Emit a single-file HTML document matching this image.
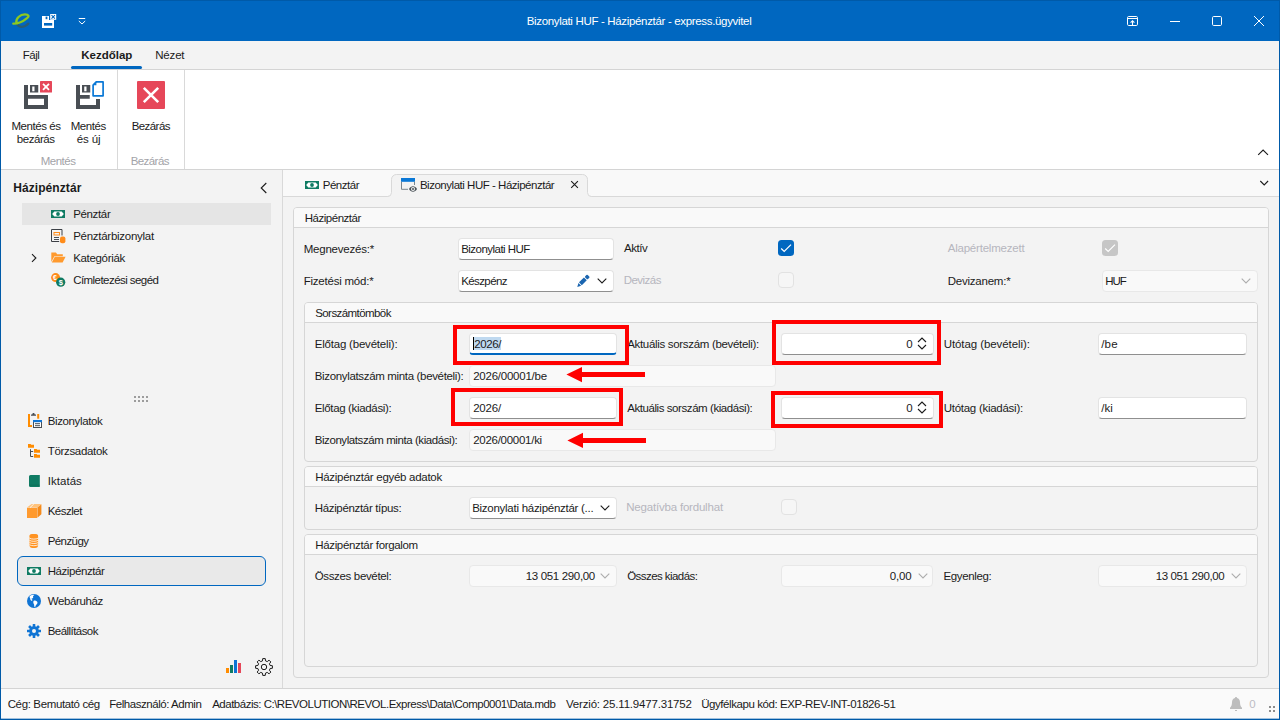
<!DOCTYPE html>
<html lang="hu">
<head>
<meta charset="utf-8">
<title>Bizonylati HUF - Házipénztár - express.ügyvitel</title>
<style>
*{box-sizing:border-box;margin:0;padding:0}
html,body{width:1280px;height:720px;overflow:hidden;background:#f3f3f3}
body{font-family:"Liberation Sans",sans-serif;font-size:11.5px;color:#1b1b1b;position:relative;line-height:14px}
.a{position:absolute}
.t{position:absolute;white-space:nowrap;line-height:14px;height:14px}
.c{text-align:center}
.r{text-align:right}
.g{color:#a3a3a8}
.d{color:#b6b6be}
.b{font-weight:bold}
svg{position:absolute;overflow:visible}
/* frame */
#titlebar{left:0;top:0;width:1280px;height:41px;background:#0067c0}
#tabrow{left:1px;top:41px;width:1278px;height:29px;background:#f3f3f3;border-bottom:1px solid #d4d4d4}
#ribbon{left:1px;top:70px;width:1278px;height:100px;background:#fff;border-bottom:1px solid #d4d4d4}
#bl{left:0;top:0;width:1px;height:720px;background:#005aa8}
#br{left:1279px;top:0;width:1px;height:720px;background:#005aa8}
#bb{left:0;top:719px;width:1280px;height:1px;background:#005aa8;box-shadow:0 -1px 0 rgba(0,90,168,.35)}
#bt{left:0;top:0;width:1280px;height:1px;background:#005aa8}
#side{left:1px;top:170px;width:282px;height:518px;background:#f3f3f3;border-right:1px solid #d9d9d9}
#status{left:1px;top:688px;width:1278px;height:31px;background:#fafafa;border-top:1px solid #d4d4d4}
#tabstrip{left:283px;top:170px;width:996px;height:27px;background:#f9f9f9;border-bottom:1px solid #d9d9d9}
#content{left:283px;top:197px;width:996px;height:491px;background:#f3f3f3}
.grp{position:absolute;border:1px solid #d6d6d6;border-radius:4px;background:#f3f3f3}
.gh{position:absolute;left:0;top:0;right:0;height:20px;background:#f9f9f9;border-bottom:1px solid #d6d6d6;border-radius:3px 3px 0 0}
.in{position:absolute;background:#fff;border:1px solid #e3e3e3;border-bottom-color:#8f8f8f;border-radius:4px}
.ro{position:absolute;background:#f9f9f9;border:1px solid #e8e8e8;border-radius:4px}
.red{position:absolute;border:4px solid #ff0000}
</style>
</head>
<body>
<div class="a" id="titlebar"></div>
<div class="a" id="tabrow"></div>
<div class="a" id="ribbon"></div>
<div class="a" id="side"></div>
<div class="a" id="tabstrip"></div>
<div class="a" id="content"></div>
<div class="a" id="status"></div>

<!--TITLE-->
<!-- app logo -->
<svg style="left:12px;top:13px" width="18" height="16" viewBox="0 0 18 16">
 <path d="M5 11 C7 15, 13 14.600, 16.400 10.600" fill="none" stroke="#2a5d73" stroke-width="2.300" stroke-linecap="round"/>
 <path d="M1.300 10.700 C5.500 10.800, 11 8.600, 15 5.200 C17.600 3, 16.600 1.300, 13 1.300 C8 1.300, 3.600 5.600, 4.400 10" fill="none" stroke="#8cc820" stroke-width="2.300" stroke-linecap="round"/>
</svg>
<!-- QAT save&close (white) -->
<svg style="left:42px;top:14px" width="15" height="14" viewBox="0 0 15 14">
 <path d="M0 2h7v4h5v8H0z" fill="#fff"/>
 <rect x="2" y="9" width="8.200" height="2.600" fill="#0067c0"/>
 <rect x="3.600" y="2.600" width="1.800" height="2.600" fill="#0067c0"/>
 <rect x="8.200" y="0" width="6" height="5.800" fill="#fff"/>
 <path d="M9.500 1.200l3.400 3.400M12.900 1.200l-3.400 3.400" stroke="#0067c0" stroke-width="1.100" fill="none"/>
</svg>
<!-- QAT dropdown -->
<svg style="left:78px;top:17px" width="8" height="8" viewBox="0 0 8 8">
 <path d="M0.8 1.5h6.4" stroke="#fff" stroke-width="1" fill="none"/>
 <path d="M0.8 4l3.2 3 3.2-3" stroke="#fff" stroke-width="1" fill="none"/>
</svg>
<div class="t" id="ttl" style="left:526.7px;letter-spacing:-0.332px;top:14px;color:#fff">Bizonylati HUF - Házipénztár - express.ügyvitel</div>
<!-- window buttons -->
<svg style="left:1127px;top:16px" width="11" height="10" viewBox="0 0 11 10">
 <rect x="0.5" y="0.5" width="10" height="9" rx="1.2" fill="none" stroke="#fff" stroke-width="1"/>
 <path d="M0.5 2.5h10" stroke="#fff" stroke-width="1"/>
 <path d="M5.5 9V5M3.6 6.6l1.9-1.9 1.9 1.9" stroke="#fff" stroke-width="1.1" fill="none"/>
</svg>
<div class="a" style="left:1170px;top:21px;width:10px;height:1px;background:#fff"></div>
<svg style="left:1212px;top:16px" width="10" height="10" viewBox="0 0 10 10">
 <rect x="0.5" y="0.5" width="9" height="9" rx="1.2" fill="none" stroke="#fff" stroke-width="1"/>
</svg>
<svg style="left:1254px;top:16px" width="10" height="10" viewBox="0 0 10 10">
 <path d="M0 0l10 10M10 0L0 10" stroke="#fff" stroke-width="1" fill="none"/>
</svg>

<!--RIBBON-->
<div class="t" id="rt1" style="left:22.7px;letter-spacing:-0.458px;top:48px">Fájl</div>
<div class="t b" id="rt2" style="left:81.2px;letter-spacing:0.009px;top:48px">Kezdőlap</div>
<div class="t" id="rt3" style="left:155.2px;letter-spacing:-0.169px;top:48px">Nézet</div>
<div class="a" style="left:71px;top:66px;width:71px;height:3px;background:#0067c0;border-radius:1.5px"></div>
<div class="a" style="left:117px;top:70px;width:1px;height:99px;background:#d9d9d9"></div>
<div class="a" style="left:184px;top:70px;width:1px;height:99px;background:#d9d9d9"></div>
<!-- save & close -->
<svg style="left:24px;top:81px" width="28" height="28" viewBox="0 0 28 28">
 <path d="M0 4h4v10h20v14H0z M4 17.75v6.25h16v-6.25z" fill="#494e54" fill-rule="evenodd"/>
 <path d="M6 4h8.25v7.5H6z M8.25 5.6v4.65h2.25V5.6z" fill="#494e54" fill-rule="evenodd"/>
 <rect x="16" y="0" width="12" height="11.6" rx="0.6" fill="#e64759"/>
 <path d="M19 2.8l6 6M25 2.8l-6 6" stroke="#fff" stroke-width="1.8" fill="none"/>
</svg>
<!-- save & new -->
<svg style="left:76px;top:81px" width="28" height="28" viewBox="0 0 28 28">
 <path d="M0 4h4v10h9.75v3.75H4V24h16v-6h4v10H0z" fill="#494e54"/>
 <path d="M6 4h8.25v7.5H6z M8.25 5.6v4.65h2.25V5.6z" fill="#494e54" fill-rule="evenodd"/>
 <path d="M20.2 0.9h6.9v13.9h-10V4z" fill="#fff" stroke="#0a78d6" stroke-width="1.7" stroke-linejoin="round"/>
 <path d="M17 4.2L20.4 0.8V4.2z" fill="#0a78d6"/>
</svg>
<!-- close -->
<svg style="left:137px;top:81px" width="28" height="28" viewBox="0 0 28 28">
 <rect x="0" y="0" width="28" height="28" rx="1" fill="#e64759"/>
 <path d="M6.8 6.8l14.4 14.4M21.2 6.8L6.8 21.2" stroke="#fff" stroke-width="2.6" fill="none"/>
</svg>
<div class="t c" id="rl1" style="left:11.4px;letter-spacing:-0.429px;top:119px">Mentés és</div>
<div class="t c" id="rl2" style="left:16.7px;letter-spacing:-0.425px;top:132px">bezárás</div>
<div class="t c" id="rl3" style="left:70.7px;letter-spacing:-0.420px;top:119px">Mentés</div>
<div class="t c" id="rl4" style="left:76.7px;letter-spacing:-0.119px;top:132px">és új</div>
<div class="t c" id="rl5" style="left:131.7px;letter-spacing:-0.570px;top:119px">Bezárás</div>
<div class="t c g" id="rg1" style="left:40.7px;letter-spacing:-0.503px;top:154px">Mentés</div>
<div class="t c g" id="rg2" style="left:130.7px;letter-spacing:-0.570px;top:154px">Bezárás</div>
<svg style="left:1258px;top:149px" width="10" height="7" viewBox="0 0 10 7">
 <path d="M0.200 5.900l4.900-4.900 4.900 4.900" stroke="#1b1b1b" stroke-width="1.100" fill="none"/>
</svg>

<!--SIDE-->
<div class="t b" id="sh" style="left:13.2px;letter-spacing:0.076px;top:181px;font-size:12px">Házipénztár</div>
<svg style="left:260px;top:183px" width="8" height="10" viewBox="0 0 8 10"><path d="M6.300 0L1.200 5l5.100 5" stroke="#1b1b1b" stroke-width="1.100" fill="none"/></svg>
<div class="a" style="left:22px;top:203px;width:249px;height:22px;background:#e5e5e5"></div>
<svg style="left:51px;top:210px" width="14" height="8" viewBox="0 0 14 8">
 <path d="M0 0h14v8H0z" fill="#0f7b63"/>
 <path d="M1.200 4L3.300 1.500H10.700L12.800 4L10.700 6.500H3.300z" fill="#fff"/>
 <ellipse cx="7" cy="4" rx="1.9" ry="2" fill="#0f7b63"/>
</svg>
<div class="t" id="s1" style="left:73.2px;letter-spacing:-0.349px;top:207px">Pénztár</div>
<!-- doc icon -->
<svg style="left:51px;top:229px" width="15" height="15" viewBox="0 0 15 15">
 <path d="M11 6.500V0.500H0.500v12h7.700" fill="none" stroke="#3c4046" stroke-width="1"/>
 <rect x="3" y="3.500" width="5.500" height="2.500" fill="none" stroke="#ff8c1a" stroke-width="1"/>
 <path d="M3 8.500h5M3 10.500h5" stroke="#4a4f55" stroke-width="1" fill="none"/>
 <rect x="9" y="7.600" width="5.400" height="6.600" rx="2" fill="#ff8c1a"/>
</svg>
<div class="t" id="s2" style="left:73.2px;letter-spacing:-0.271px;top:229px">Pénztárbizonylat</div>
<svg style="left:31px;top:253px" width="6" height="10" viewBox="0 0 6 10"><path d="M1 1.200L4.900 5 1 8.800" stroke="#1b1b1b" stroke-width="1.100" fill="none"/></svg>
<!-- folder -->
<svg style="left:51px;top:252px" width="15" height="11" viewBox="0 0 15 11">
 <path d="M0.3 0.6h4.6l1.3 1.6h5.6v2H3.4L0.3 10z" fill="#ff9a2e"/>
 <path d="M3.8 4.8H14.6L11.6 10.6H0.8z" fill="#ff9a2e"/>
</svg>
<div class="t" id="s3" style="left:73.2px;letter-spacing:-0.328px;top:251px">Kategóriák</div>
<!-- coins -->
<svg style="left:51px;top:273px" width="15" height="14" viewBox="0 0 15 14" font-family="Liberation Sans, sans-serif" font-weight="bold" fill="#fff">
 <circle cx="4.600" cy="4.600" r="4.500" fill="#ff8c1a"/>
 <text x="2" y="7" font-size="7">€</text>
 <circle cx="9.700" cy="9.200" r="4.600" fill="#0f7b63"/>
 <text x="7.700" y="11.900" font-size="7.500">$</text>
</svg>
<div class="t" id="s4" style="left:73.2px;letter-spacing:-0.553px;top:273px">Címletezési segéd</div>
<!-- grip -->
<svg style="left:134px;top:396px" width="14" height="6" viewBox="0 0 14 6" shape-rendering="crispEdges">
 <g fill="#9c9c9c"><rect x="0" y="0" width="2" height="2"/><rect x="4" y="0" width="2" height="2"/><rect x="8" y="0" width="2" height="2"/><rect x="12" y="0" width="2" height="2"/>
 <rect x="0" y="4" width="2" height="2"/><rect x="4" y="4" width="2" height="2"/><rect x="8" y="4" width="2" height="2"/><rect x="12" y="4" width="2" height="2"/></g>
</svg>
<!-- nav -->
<div class="a" style="left:17px;top:556px;width:249px;height:30px;background:#e9e9e9;border:1px solid #0067c0;border-radius:6px"></div>
<!-- Bizonylatok -->
<svg style="left:28px;top:413px" width="14" height="15" viewBox="0 0 14 15">
 <path d="M0 1h2v11h2v2H0z" fill="#ff8c00"/>
 <rect x="9.200" y="1" width="2" height="4.700" fill="#ff8c00"/>
 <path d="M3 2.700V1.400h1.200C4.400.5 5 0 5.500 0s1.100.5 1.300 1.400H8v1.300z" fill="#494e54"/>
 <rect x="5.500" y="7.500" width="8" height="7" fill="#fff" stroke="#494e54" stroke-width="1"/>
 <rect x="5" y="7" width="9" height="2.200" fill="#0f74d4"/>
 <path d="M7 10.700h5M7 12.700h5" stroke="#494e54" stroke-width="1"/>
</svg>
<div class="t" id="n1" style="left:47.7px;letter-spacing:-0.374px;top:414px">Bizonylatok</div>
<!-- Törzsadatok -->
<svg style="left:28px;top:444px" width="12" height="14" viewBox="0 0 12 14">
 <path d="M0 0h2.600l.7.800H6v3H0z" fill="#ff8c00"/>
 <path d="M6 5h2.600l.7.800H12v3H6z" fill="#ff8c00"/>
 <path d="M6 10h2.600l.7.800H12v3H6z" fill="#ff8c00"/>
 <path d="M2.500 5.200v7.300h2.700M2.500 7.500h2.700" fill="none" stroke="#494e54" stroke-width="1"/>
</svg>
<div class="t" id="n2" style="left:47.7px;letter-spacing:-0.326px;top:444px">Törzsadatok</div>
<!-- Iktatás -->
<svg style="left:29px;top:475px" width="11" height="12" viewBox="0 0 11 12">
 <path d="M1.500 0h9.300v12H1.500A1.500 1.500 0 0 1 0 10.500v-9A1.500 1.500 0 0 1 1.500 0z" fill="#0f7b63"/>
 <path d="M0.600 10.200h10" stroke="#0f6f58" stroke-width="0.800"/>
</svg>
<div class="t" id="n3" style="left:47.7px;letter-spacing:0.044px;top:474px">Iktatás</div>
<!-- Készlet -->
<svg style="left:27px;top:504px" width="15" height="14" viewBox="0 0 15 14">
 <path d="M0 3.600L4.600 0h9.800l-4.200 3.600z" fill="#ffc27a"/>
 <path d="M0 3.800h10v10.200H0z" fill="#ff9a2e"/>
 <path d="M10.400 3.600L14.400 0.200v10L10.400 13.800z" fill="#f58a1a"/>
 <path d="M6.800 0L3 3.600" stroke="#fff" stroke-width="0.800"/>
</svg>
<div class="t" id="n4" style="left:47.7px;letter-spacing:-0.503px;top:504px">Készlet</div>
<!-- Pénzügy -->
<svg style="left:29px;top:534px" width="10" height="14" viewBox="0 0 10 14">
 <rect x="0.500" y="0" width="8.600" height="14" rx="3" fill="#ff9322"/>
 <path d="M0.500 4.200c2 1.200 6.600 1.200 8.600 0M0.500 6.400c2 1.200 6.600 1.200 8.600 0M0.500 8.600c2 1.200 6.600 1.200 8.600 0M0.500 10.800c2 1.200 6.600 1.200 8.600 0" stroke="#fff" stroke-width="0.800" fill="none"/>
 <ellipse cx="4.800" cy="2" rx="4.300" ry="1.900" fill="#ff9322"/>
</svg>
<div class="t" id="n5" style="left:47.7px;letter-spacing:-0.581px;top:534px">Pénzügy</div>
<svg style="left:27px;top:567px" width="14" height="8" viewBox="0 0 14 8">
 <path d="M0 0h14v8H0z" fill="#0f7b63"/>
 <path d="M1.200 4L3.300 1.500H10.700L12.800 4L10.700 6.500H3.300z" fill="#fff"/>
 <ellipse cx="7" cy="4" rx="1.9" ry="2" fill="#0f7b63"/>
</svg>
<div class="t" id="n6" style="left:47.7px;letter-spacing:-0.425px;top:564px">Házipénztár</div>
<!-- globe -->
<svg style="left:27px;top:594px" width="14" height="14" viewBox="0 0 14 14">
 <circle cx="7" cy="7" r="7" fill="#0f74d4"/>
 <path d="M3.200 1.800c1.200-.9 2.800-1.300 4.200-1.100-.2.700-.9.900-1.300 1.500-.3.600.3 1.100 0 1.700-.4.500-1.100.2-1.500.7-.3.500.3 1 .9 1.200L5 6.800C4 6.600 3.300 5.800 3.300 4.900c0-.9-.8-1.300-.9-2.200z" fill="#fff"/>
 <path d="M6.800 6.800c.9-.5 2.100-.2 2.900.5.700.6 1 1.300.6 2.100-.4.800-1.200 1.100-1.500 1.900-.2.600-.3 1.500-.9 1.600-.7.100-.7-1-.7-1.700 0-.8-.7-1.300-.8-2.100-.1-.8-.2-1.800.4-2.300z" fill="#fff"/>
</svg>
<div class="t" id="n7" style="left:47.7px;letter-spacing:-0.379px;top:594px">Webáruház</div>
<!-- gear filled -->
<svg style="left:27px;top:624px" width="14" height="14" viewBox="0 0 14 14">
 <g fill="#0f74d4"><circle cx="7" cy="7" r="4.800"/>
 <rect x="5.700" y="0" width="2.600" height="14" rx=".3"/>
 <rect x="5.700" y="0" width="2.600" height="14" rx=".3" transform="rotate(45 7 7)"/>
 <rect x="5.700" y="0" width="2.600" height="14" rx=".3" transform="rotate(90 7 7)"/>
 <rect x="5.700" y="0" width="2.600" height="14" rx=".3" transform="rotate(135 7 7)"/></g>
 <circle cx="7" cy="7" r="2" fill="#f3f3f3"/>
</svg>
<div class="t" id="n8" style="left:47.7px;letter-spacing:-0.551px;top:624px">Beállítások</div>
<!-- bars -->
<svg style="left:226px;top:659px" width="15" height="14" viewBox="0 0 15 14" shape-rendering="crispEdges">
 <rect x="0" y="9" width="3" height="5" fill="#ff8c00"/>
 <rect x="4" y="6" width="3" height="8" fill="#0f7b63"/>
 <rect x="8" y="1" width="3" height="13" fill="#0f74d4"/>
 <rect x="12" y="4" width="3" height="10" fill="#e64759"/>
</svg>
<!-- gear outline -->
<svg style="left:255px;top:658px" width="18" height="18" viewBox="0 0 18 18">
 <path d="M7.48 2.89 L7.74 0.59 L10.26 0.59 L10.52 2.89 L12.25 3.60 L14.05 2.16 L15.84 3.95 L14.40 5.75 L15.11 7.48 L17.41 7.74 L17.41 10.26 L15.11 10.52 L14.40 12.25 L15.84 14.05 L14.05 15.84 L12.25 14.40 L10.52 15.11 L10.26 17.41 L7.74 17.41 L7.48 15.11 L5.75 14.40 L3.95 15.84 L2.16 14.05 L3.60 12.25 L2.89 10.52 L0.59 10.26 L0.59 7.74 L2.89 7.48 L3.60 5.75 L2.16 3.95 L3.95 2.16 L5.75 3.60z" fill="none" stroke="#1b1b1b" stroke-width="1" stroke-linejoin="round"/>
 <circle cx="9" cy="9" r="2.700" fill="none" stroke="#1b1b1b" stroke-width="1"/>
</svg>

<!--TABS-->
<!-- active tab shape -->
<svg style="left:383px;top:174px" width="214" height="24" viewBox="0 0 214 24">
 <path d="M0 22.500H4.500a4 4 0 0 0 4-4V5.500a5 5 0 0 1 5-5H199.500a5 5 0 0 1 5 5V18.500a4 4 0 0 0 4 4H214V24H0z" fill="#f3f3f3"/>
 <path d="M0 22.500H4.500a4 4 0 0 0 4-4V5.500a5 5 0 0 1 5-5H199.500a5 5 0 0 1 5 5V18.500a4 4 0 0 0 4 4H214" fill="none" stroke="#d9d9d9" stroke-width="1"/>
</svg>
<svg style="left:305px;top:181px" width="14" height="8" viewBox="0 0 14 8">
 <path d="M0 0h14v8H0z" fill="#0f7b63"/>
 <path d="M1.200 4L3.300 1.500H10.700L12.800 4L10.700 6.500H3.300z" fill="#fff"/>
 <ellipse cx="7" cy="4" rx="1.900" ry="2" fill="#0f7b63"/>
</svg>
<div class="t" id="tb1" style="left:322.7px;letter-spacing:-0.449px;top:178px">Pénztár</div>
<svg style="left:401px;top:178px" width="17" height="15" viewBox="0 0 17 15">
 <rect x="0" y="0" width="14" height="3.800" fill="#0a78d6"/>
 <path d="M0.500 3.800V11.300H7M13.500 3.800V7" fill="none" stroke="#7a858d" stroke-width="1"/>
 <path d="M8 11c1.800-3.600 6.200-3.600 8 0-1.800 3.600-6.200 3.600-8 0z" fill="#4b5359"/>
 <circle cx="12" cy="11" r="2" fill="#f3f3f3"/>
 <circle cx="12" cy="11" r="1" fill="#4b5359"/>
</svg>
<div class="t" id="tb2" style="left:419.9px;letter-spacing:-0.476px;top:178px">Bizonylati HUF - Házipénztár</div>
<svg style="left:571px;top:181px" width="7" height="7" viewBox="0 0 7 7"><path d="M0.200 0.200l6.700 6.700M6.900 0.200L0.200 6.900" stroke="#1b1b1b" stroke-width="1.100" fill="none"/></svg>
<svg style="left:1260px;top:180px" width="9" height="7" viewBox="0 0 9 7"><path d="M0.300 1l3.900 3.900 3.900-3.900" stroke="#1b1b1b" stroke-width="1.100" fill="none"/></svg>

<!--FORM-->
<!-- outer group -->
<div class="grp" style="left:293px;top:207px;width:976px;height:471px"><div class="gh"></div></div>
<div class="t" id="g0" style="left:304.7px;letter-spacing:-0.470px;top:211px">Házipénztár</div>

<div class="t" id="l1" style="left:303.7px;letter-spacing:-0.223px;top:242px">Megnevezés:*</div>
<div class="in" style="left:458px;top:238px;width:156px;height:22px"></div>
<div class="t" id="v1" style="left:461.2px;letter-spacing:-0.526px;top:242px">Bizonylati HUF</div>
<div class="t" id="l2" style="left:624.0px;letter-spacing:-0.423px;top:241px">Aktív</div>
<svg style="left:778px;top:240px" width="16" height="16" viewBox="0 0 16 16"><rect width="16" height="16" rx="3.500" fill="#0067c0"/><path d="M3.200 8.500l3 3 6.800-6.900" stroke="#fff" stroke-width="1.200" fill="none"/></svg>
<div class="t d" id="l3" style="left:947.7px;letter-spacing:-0.214px;top:241px">Alapértelmezett</div>
<svg style="left:1102px;top:240px" width="16" height="16" viewBox="0 0 16 16"><rect width="16" height="16" rx="3.500" fill="#c6c6c6"/><path d="M3.200 8.500l3 3 6.800-6.900" stroke="#fff" stroke-width="1.200" fill="none"/></svg>

<div class="t" id="l4" style="left:303.7px;letter-spacing:-0.226px;top:274px">Fizetési mód:*</div>
<div class="in" style="left:458px;top:270px;width:156px;height:22px"></div>
<div class="t" id="v2" style="left:461.2px;letter-spacing:-0.602px;top:274px">Készpénz</div>
<svg style="left:577px;top:275px" width="12" height="12" viewBox="0 0 12 12">
 <g transform="translate(0.300 11.900) rotate(-45)" fill="#1a65b0">
  <path d="M0 0L3.500 -1.900V1.900z"/>
  <rect x="4.400" y="-2" width="7" height="4"/>
  <rect x="12.300" y="-2" width="3.500" height="4" rx="0.900"/>
 </g>
</svg>
<svg style="left:597px;top:278px" width="10" height="6" viewBox="0 0 10 6"><path d="M0.700 0.700l4.300 4.200 4.300-4.200" stroke="#1b1b1b" stroke-width="1.100" fill="none"/></svg>
<div class="t d" id="l5" style="left:623.7px;letter-spacing:-0.529px;top:273px">Devizás</div>
<div class="a" style="left:778px;top:272px;width:16px;height:16px;border:1px solid #e2e2e2;border-radius:4px;background:#f6f6f6"></div>
<div class="t" id="l6" style="left:947.7px;letter-spacing:-0.228px;top:274px">Devizanem:*</div>
<div class="ro" style="left:1102px;top:270px;width:156px;height:22px"></div>
<div class="t" id="v3" style="left:1105.2px;letter-spacing:-0.980px;top:274px">HUF</div>
<svg style="left:1241px;top:278px" width="10" height="6" viewBox="0 0 10 6"><path d="M0.700 0.700l4.300 4.200 4.300-4.200" stroke="#adadad" stroke-width="1.100" fill="none"/></svg>

<!-- Sorszámtömbök -->
<div class="grp" style="left:304px;top:302px;width:954px;height:160px"><div class="gh"></div></div>
<div class="t" id="g1" style="left:315.2px;letter-spacing:-0.569px;top:306px">Sorszámtömbök</div>

<div class="t" id="a1" style="left:314.7px;letter-spacing:-0.200px;top:337px">Előtag (bevételi):</div>
<div class="in" style="left:469px;top:333px;width:148px;height:22px;border-bottom:2px solid #0067c0"></div>
<div class="a" style="left:474px;top:337px;width:27px;height:13px;background:#bfd9f0"></div>
<div class="a" style="left:473px;top:337px;width:1px;height:13px;background:#000"></div>
<div class="t" id="va1" style="left:474.2px;letter-spacing:-0.376px;top:337px">2026/</div>
<div class="t" id="a2" style="left:627.2px;letter-spacing:-0.318px;top:337px">Aktuális sorszám (bevételi):</div>
<div class="in" style="left:781px;top:333px;width:153px;height:22px"></div>
<div class="t r" id="va2" style="left:906.2px;letter-spacing:-1.206px;top:337px">0</div>
<svg style="left:917px;top:337px" width="10" height="14" viewBox="0 0 10 14"><path d="M1 5l4-4 4 4M1 8l4 4 4-4" stroke="#1b1b1b" stroke-width="1.100" fill="none"/></svg>
<div class="t" id="a3" style="left:943.7px;letter-spacing:-0.077px;top:337px">Utótag (bevételi):</div>
<div class="in" style="left:1098px;top:333px;width:149px;height:22px"></div>
<div class="t" id="va3" style="left:1101.2px;letter-spacing:0.233px;top:337px">/be</div>

<div class="t" id="b1" style="left:314.7px;letter-spacing:-0.337px;top:369px">Bizonylatszám minta (bevételi):</div>
<div class="ro" style="left:469px;top:365px;width:307px;height:22px"></div>
<div class="t" id="vb1" style="left:473.2px;letter-spacing:-0.235px;top:369px">2026/00001/be</div>

<div class="t" id="c1" style="left:314.7px;letter-spacing:-0.339px;top:401px">Előtag (kiadási):</div>
<div class="in" style="left:469px;top:397px;width:148px;height:22px"></div>
<div class="t" id="vc1" style="left:473.2px;letter-spacing:-0.216px;top:401px">2026/</div>
<div class="t" id="c2" style="left:627.2px;letter-spacing:-0.428px;top:401px">Aktuális sorszám (kiadási):</div>
<div class="in" style="left:781px;top:397px;width:153px;height:22px"></div>
<div class="t r" id="vc2" style="left:906.2px;letter-spacing:-1.206px;top:401px">0</div>
<svg style="left:917px;top:401px" width="10" height="14" viewBox="0 0 10 14"><path d="M1 5l4-4 4 4M1 8l4 4 4-4" stroke="#1b1b1b" stroke-width="1.100" fill="none"/></svg>
<div class="t" id="c3" style="left:943.7px;letter-spacing:-0.267px;top:401px">Utótag (kiadási):</div>
<div class="in" style="left:1098px;top:397px;width:149px;height:22px"></div>
<div class="t" id="vc3" style="left:1101.2px;letter-spacing:0.067px;top:401px">/ki</div>

<div class="t" id="d1" style="left:314.7px;letter-spacing:-0.420px;top:433px">Bizonylatszám minta (kiadási):</div>
<div class="ro" style="left:469px;top:429px;width:307px;height:22px"></div>
<div class="t" id="vd1" style="left:473.2px;letter-spacing:-0.274px;top:433px">2026/00001/ki</div>

<!-- red annotations -->
<div class="red" style="left:453px;top:325px;width:176px;height:40px"></div>
<div class="red" style="left:772px;top:320px;width:169px;height:45px"></div>
<div class="red" style="left:451px;top:388px;width:172px;height:38px"></div>
<div class="red" style="left:771px;top:391px;width:172px;height:37px"></div>
<svg style="left:566px;top:366px" width="80" height="17" viewBox="0 0 80 17"><path d="M0.400 8.600L16 0.900V6H79V11H16V16.200z" fill="#ff0000"/></svg>
<svg style="left:567px;top:432px" width="80" height="17" viewBox="0 0 80 17"><path d="M0.400 8.600L16 0.800V6H79V11H16V16z" fill="#ff0000"/></svg>

<!-- egyéb adatok -->
<div class="grp" style="left:304px;top:466px;width:954px;height:64px"><div class="gh"></div></div>
<div class="t" id="g2" style="left:315.2px;letter-spacing:-0.289px;top:470px">Házipénztár egyéb adatok</div>
<div class="t" id="e1" style="left:314.7px;letter-spacing:-0.333px;top:501px">Házipénztár típus:</div>
<div class="in" style="left:469px;top:497px;width:148px;height:22px"></div>
<div class="t" id="ve1" style="left:472.2px;letter-spacing:-0.270px;top:501px">Bizonylati házipénztár (...</div>
<svg style="left:600px;top:505px" width="10" height="6" viewBox="0 0 10 6"><path d="M0.700 0.700l4.300 4.200 4.300-4.200" stroke="#1b1b1b" stroke-width="1.100" fill="none"/></svg>
<div class="t d" id="e2" style="left:626.2px;letter-spacing:-0.193px;top:500px">Negatívba fordulhat</div>
<div class="a" style="left:781px;top:499px;width:16px;height:16px;border:1px solid #e2e2e2;border-radius:4px;background:#f6f6f6"></div>

<!-- forgalom -->
<div class="grp" style="left:304px;top:534px;width:954px;height:133px"><div class="gh"></div></div>
<div class="t" id="g3" style="left:315.2px;letter-spacing:-0.331px;top:538px">Házipénztár forgalom</div>
<div class="t" id="f1" style="left:314.7px;letter-spacing:-0.342px;top:569px">Összes bevétel:</div>
<div class="ro" style="left:469px;top:565px;width:148px;height:22px"></div>
<div class="t r" id="vf1" style="left:525.7px;letter-spacing:-0.334px;top:569px">13 051 290,00</div>
<svg style="left:600px;top:573px" width="10" height="6" viewBox="0 0 10 6"><path d="M0.700 0.700l4.300 4.200 4.300-4.200" stroke="#adadad" stroke-width="1.100" fill="none"/></svg>
<div class="t" id="f2" style="left:627.2px;letter-spacing:-0.556px;top:569px">Összes kiadás:</div>
<div class="ro" style="left:781px;top:565px;width:152px;height:22px"></div>
<div class="t r" id="vf2" style="left:889.7px;letter-spacing:-0.173px;top:569px">0,00</div>
<svg style="left:918px;top:573px" width="10" height="6" viewBox="0 0 10 6"><path d="M0.700 0.700l4.300 4.200 4.300-4.200" stroke="#adadad" stroke-width="1.100" fill="none"/></svg>
<div class="t" id="f3" style="left:943.5px;letter-spacing:-0.362px;top:569px">Egyenleg:</div>
<div class="ro" style="left:1098px;top:565px;width:149px;height:22px"></div>
<div class="t r" id="vf3" style="left:1155.7px;letter-spacing:-0.373px;top:569px">13 051 290,00</div>
<svg style="left:1231px;top:573px" width="10" height="6" viewBox="0 0 10 6"><path d="M0.700 0.700l4.300 4.200 4.300-4.200" stroke="#adadad" stroke-width="1.100" fill="none"/></svg>

<!--STATUS-->
<div class="t" id="st1" style="left:7.7px;letter-spacing:-0.368px;top:697px">Cég: Bemutató cég</div>
<div class="t" id="st2" style="left:109.2px;letter-spacing:-0.454px;top:697px">Felhasználó: Admin</div>
<div class="t" id="st3" style="left:212.2px;letter-spacing:-0.493px;top:697px">Adatbázis: C:\REVOLUTION\REVOL.Express\Data\Comp0001\Data.mdb</div>
<div class="t" id="st4" style="left:566.0px;letter-spacing:-0.187px;top:697px">Verzió: 25.11.9477.31752</div>
<div class="t" id="st5" style="left:701.2px;letter-spacing:-0.430px;top:697px">Ügyfélkapu kód: EXP-REV-INT-01826-51</div>
<svg style="left:1230px;top:697px" width="12" height="15" viewBox="0 0 12 15"><path d="M6 0c.6 0 1 .4 1 1 1.900.5 3 2.100 3 4.200 0 2.800.6 4.300 2 5.600V12H0v-1.200c1.400-1.300 2-2.800 2-5.600C2 3.100 3.100 1.500 5 1c0-.6.400-1 1-1z" fill="#bdbdbd"/><rect x="5" y="13" width="2" height="1" fill="#bdbdbd"/></svg>
<div class="t" id="st6" style="left:1249.2px;letter-spacing:-1.006px;top:697px;color:#bcbcc4">0</div>
<svg style="left:1269px;top:706px" width="6" height="6" viewBox="0 0 6 6"><g fill="#8c8c8c"><rect x="0" y="0" width="2" height="2"/><rect x="4" y="0" width="2" height="2"/><rect x="0" y="4" width="2" height="2"/><rect x="4" y="4" width="2" height="2"/></g></svg>


<div class="a" id="bl"></div>
<div class="a" id="br"></div>
<div class="a" id="bb"></div>
<div class="a" id="bt"></div>
</body>
</html>
